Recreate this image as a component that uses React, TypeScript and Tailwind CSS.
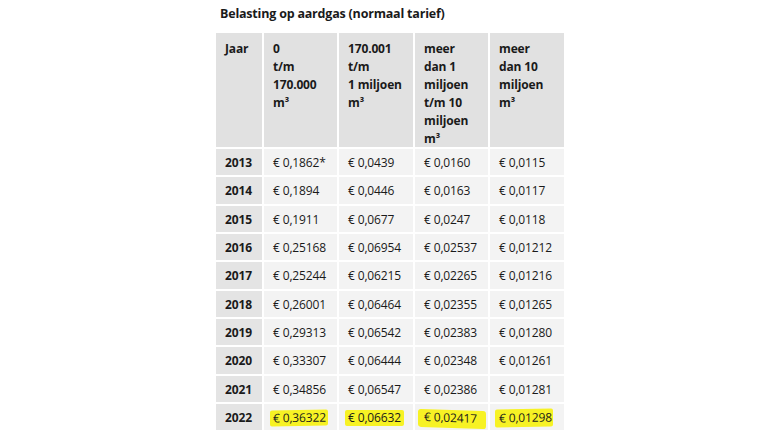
import React from "react";

const rows: [string, string, string, string, string][] = [
  ["2013", "€ 0,1862*", "€ 0,0439", "€ 0,0160", "€ 0,0115"],
  ["2014", "€ 0,1894", "€ 0,0446", "€ 0,0163", "€ 0,0117"],
  ["2015", "€ 0,1911", "€ 0,0677", "€ 0,0247", "€ 0,0118"],
  ["2016", "€ 0,25168", "€ 0,06954", "€ 0,02537", "€ 0,01212"],
  ["2017", "€ 0,25244", "€ 0,06215", "€ 0,02265", "€ 0,01216"],
  ["2018", "€ 0,26001", "€ 0,06464", "€ 0,02355", "€ 0,01265"],
  ["2019", "€ 0,29313", "€ 0,06542", "€ 0,02383", "€ 0,01280"],
  ["2020", "€ 0,33307", "€ 0,06444", "€ 0,02348", "€ 0,01261"],
  ["2021", "€ 0,34856", "€ 0,06547", "€ 0,02386", "€ 0,01281"],
];

const headers: string[][] = [
  ["Jaar"],
  ["0", "t/m", "170.000", "m³"],
  ["170.001", "t/m", "1 miljoen", "m³"],
  ["meer", "dan 1", "miljoen", "t/m 10", "miljoen", "m³"],
  ["meer", "dan 10", "miljoen", "m³"],
];

export default function App() {
  return (
    <div
      className="w-[780px] h-[439px] bg-white overflow-hidden text-[#1a1a1a]"
      style={{ fontFamily: '"Open Sans", "Noto Sans", sans-serif' }}
    >
      <div className="ml-[216px] pt-[5px]">
        <div className="pl-[4px] text-[12.5px] font-bold h-[28px] leading-[18px] tracking-[-0.2px]">
          Belasting op aardgas (normaal tarief)
        </div>
        <div className="grid grid-cols-[46px_73px_74px_73px_74px] gap-[2px] w-[348px] text-[12px] tracking-[-0.15px]">
          {headers.map((h, i) => (
            <div key={i} className="bg-[#e1e1e1] h-[114px] px-[9px] pt-[7px] font-bold leading-[18px]">
              {h.map((l, j) => (
                <div key={j}>{l}</div>
              ))}
            </div>
          ))}
          {rows.map((r) =>
            r.map((c, i) => (
              <div
                key={r[0] + i}
                className={
                  "h-[26.33px] flex items-center px-[9px] pt-[2px] " +
                  (i === 0 ? "bg-[#e4e4e4] font-bold" : "bg-[#f3f3f3]")
                }
              >
                {c}
              </div>
            ))
          )}
          <div className="h-[26.33px] flex items-center px-[9px] pt-[2px] bg-[#e4e4e4] font-bold">2022</div>
          <div className="h-[26.33px] flex items-center pl-[6px] pt-[2px] bg-[#f3f3f3]">
            <span className="bg-[#f7f224] pl-[3px] pr-[2px] py-[1px] leading-[14px] rounded-[2px] -skew-y-1">€ 0,36322</span>
          </div>
          <div className="h-[26.33px] flex items-center pl-[6px] pt-[2px] bg-[#f3f3f3]">
            <span className="bg-[#f7f224] pl-[3px] pr-[3px] py-[1px] leading-[14px] rounded-[2px]">€ 0,06632</span>
          </div>
          <div className="h-[26.33px] flex items-center pl-[3px] pt-[4px] bg-[#f3f3f3]">
            <span className="bg-[#f7f224] pl-[6px] pr-[9px] pt-[1px] pb-[3px] leading-[14px] rounded-[3px] skew-y-2">€ 0,02417</span>
          </div>
          <div className="h-[26.33px] flex items-center pl-[5px] pt-[2px] bg-[#f3f3f3]">
            <span className="bg-[#f7f224] pl-[4px] pr-[1px] py-[2px] leading-[14px] rounded-[2px] -skew-y-1">€ 0,01298</span>
          </div>
        </div>
      </div>
    </div>
  );
}
